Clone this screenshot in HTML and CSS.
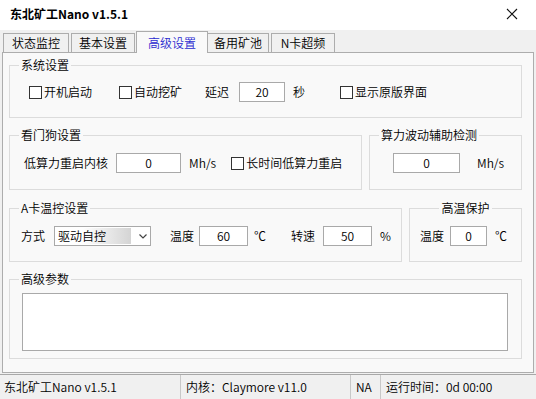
FILE: index.html
```html
<!DOCTYPE html>
<html lang="zh-CN">
<head>
<meta charset="utf-8">
<title>东北矿工Nano v1.5.1</title>
<link rel="stylesheet" href="styles.css">
</head>
<body>
<div class="window">
  <div class="titlebar">
    <div class="title">东北矿工Nano v1.5.1</div>
    <svg class="close" width="12" height="12" viewBox="0 0 12 12"><path d="M1 1L11 11M11 1L1 11" stroke="#111" stroke-width="1.1" fill="none"/></svg>
  </div>
  <div class="tabs">
    <div class="tab t1">状态监控</div>
    <div class="tab t2">基本设置</div>
    <div class="tab t3 active">高级设置</div>
    <div class="tab t4">备用矿池</div>
    <div class="tab t5">N卡超频</div>
  </div>
  <div class="panel">
    <fieldset class="grp g-sys">
      <legend>系统设置</legend>
      <div class="row">
        <span class="cb s1"></span><span class="lbl">开机启动</span>
        <span class="cb s2"></span><span class="lbl">自动挖矿</span>
        <span class="lbl s3">延迟</span>
        <span class="inp w-delay s4">20</span>
        <span class="lbl s5">秒</span>
        <span class="cb s6"></span><span class="lbl">显示原版界面</span>
      </div>
    </fieldset>
    <div class="pair">
      <fieldset class="grp g-dog">
        <legend>看门狗设置</legend>
        <div class="row">
          <span class="lbl d1">低算力重启内核</span>
          <span class="inp w-hash d2">0</span>
          <span class="lbl d3">Mh/s</span>
          <span class="cb d4"></span><span class="lbl">长时间低算力重启</span>
        </div>
      </fieldset>
      <fieldset class="grp g-wave">
        <legend>算力波动辅助检测</legend>
        <div class="row">
          <span class="inp w-wave v1">0</span>
          <span class="lbl v2">Mh/s</span>
        </div>
      </fieldset>
    </div>
    <div class="pair">
      <fieldset class="grp g-temp">
        <legend>A卡温控设置</legend>
        <div class="row">
          <span class="lbl a1">方式</span>
          <span class="select a2"><span class="sel-text">驱动自控</span><svg class="chev" width="8" height="5" viewBox="0 0 8 5"><path d="M0.5 0.5L4 4L7.5 0.5" stroke="#444" stroke-width="1.2" fill="none"/></svg></span>
          <span class="lbl a3">温度</span>
          <span class="inp w-t a4">60</span>
          <span class="lbl a5">℃</span>
          <span class="lbl a6">转速</span>
          <span class="inp w-t a7">50</span>
          <span class="lbl a8">%</span>
        </div>
      </fieldset>
      <fieldset class="grp g-hot">
        <legend class="center">高温保护</legend>
        <div class="row">
          <span class="lbl h1">温度</span>
          <span class="inp w-hot h2">0</span>
          <span class="lbl h3">℃</span>
        </div>
      </fieldset>
    </div>
    <fieldset class="grp g-adv">
      <legend>高级参数</legend>
      <div class="textarea"></div>
    </fieldset>
  </div>
  <div class="status">
    <div class="seg seg1">东北矿工Nano v1.5.1</div>
    <div class="seg seg2">内核：Claymore v11.0</div>
    <div class="seg seg3">NA</div>
    <div class="seg seg4">运行时间：0d 00:00</div>
  </div>
</div>
</body>
</html>
```

FILE: styles.css
```css
* { box-sizing: border-box; }
html, body { margin: 0; padding: 0; }
body {
  width: 536px;
  height: 399px;
  overflow: hidden;
  background: #f0f0f0;
  font-family: "Noto Sans CJK SC", "Noto Sans", sans-serif;
  font-size: 12px;
  font-weight: 350;
  line-height: 16px;
  color: #000;
}
.window { width: 536px; height: 399px; display: flex; flex-direction: column; }

.titlebar {
  height: 30px;
  background: #fff;
  display: flex;
  align-items: center;
  justify-content: space-between;
  padding: 0 18px 2px 10px;
}
.title { font-weight: bold; font-size: 12px; }
.close { display: block; }

.tabs {
  height: 22px;
  display: flex;
  align-items: flex-end;
  padding-left: 3px;
}
.tab {
  height: 19px;
  border: 1px solid #acacac;
  border-bottom: none;
  background: #f0f0f0;
  text-align: center;
  line-height: 18px;
  margin-right: 2px;
}
.t1 { width: 66px; }
.t2 { width: 64px; margin-right: 0; }
.t3 { width: 72px; }
.t4 { width: 62px; margin-left: -1px; }
.t5 { width: 64px; }
.tab.active {
  height: 22px;
  background: #f9f9f9;
  color: #2a2ad0;
  line-height: 22px;
  margin-bottom: -1px;
  position: relative;
  z-index: 1;
  margin-left: 1px;
  margin-right: 0;
}

.panel {
  margin: 0 2px;
  height: 321px;
  border: 1px solid #adadad;
  background: #f9f9f9;
  padding: 4px 11px 0 6px;
  display: flex;
  flex-direction: column;
}

.grp {
  margin: 0;
  border: 1px solid #dcdcdc;
  padding: 0;
  min-width: 0;
}
.grp legend {
  padding: 0 2px;
  margin-left: 9px;
  line-height: 16px;
  font-size: 12px;
}
.grp legend.center { margin-left: auto; margin-right: auto; }

.row { display: flex; align-items: center; height: 20px; }
.lbl { white-space: nowrap; }
.cb {
  width: 13px; height: 13px;
  border: 1px solid #333;
  background: #fff;
  margin-right: 2px;
  flex: none;
}
.inp {
  height: 20px;
  border: 1px solid #a9a9a9;
  background: #fff;
  text-align: center;
  line-height: 18px;
  flex: none;
}

/* system group */
.g-sys { height: 61px; padding-top: 9px; }
.s1 { margin-left: 19px; }
.s2 { margin-left: 27px; }
.s3 { margin-left: 23px; }
.s4 { margin-left: 10px; }
.w-delay { width: 46px; }
.s5 { margin-left: 8px; }
.s6 { margin-left: 35px; }

.pair { display: flex; gap: 7px; }

/* watchdog */
.g-dog { width: 353px; height: 63px; padding-top: 10px; margin-top: 9px; }
.g-wave { width: 153px; height: 63px; padding-top: 10px; margin-top: 9px; }
.d1 { margin-left: 14px; }
.d2 { margin-left: 8px; }
.w-hash { width: 65px; }
.d3 { margin-left: 8px; }
.d4 { margin-left: 15px; }
.v1 { margin-left: 23px; }
.w-wave { width: 67px; }
.v2 { margin-left: 17px; }

/* temp */
.g-temp { width: 393px; height: 62px; padding-top: 10px; margin-top: 10px; }
.g-hot { width: 113px; height: 62px; padding-top: 10px; margin-top: 10px; }
.a1 { margin-left: 11px; }
.a2 { margin-left: 9px; }
.select {
  width: 97px; height: 20px;
  border: 1px solid #a9a9a9;
  background: #fff;
  display: flex;
  align-items: center;
  padding-left: 2px;
  flex: none;
}
.sel-text {
  width: 74px; height: 16px;
  line-height: 16px;
  padding-left: 1px;
  background: linear-gradient(to right, #ffffff 35%, #d4d4d4 100%);
}
.chev { margin-left: 8px; display: block; }
.a3 { margin-left: 19px; }
.a4 { margin-left: 5px; }
.w-t { width: 49px; }
.a5 { margin-left: 6px; }
.a6 { margin-left: 25px; }
.a7 { margin-left: 8px; }
.a8 { margin-left: 8px; }
.h1 { margin-left: 10px; }
.h2 { margin-left: 6px; }
.w-hot { width: 37px; }
.h3 { margin-left: 8px; }

/* advanced */
.g-adv { height: 88px; padding-top: 6px; margin-top: 9px; }
.textarea {
  margin-left: 12px;
  width: 486px;
  height: 58px;
  border: 1px solid #a9a9a9;
  background: #fff;
}

/* status bar */
.status {
  margin-top: 1px;
  height: 25px;
  border-top: 1px solid #a8a8a8;
  display: flex;
  align-items: stretch;
}
.seg { line-height: 23px; white-space: nowrap; }
.seg1 { width: 181px; padding-left: 4px; border-right: 1px solid #c8c8c8; }
.seg2 { width: 170px; padding-left: 5px; border-right: 1px solid #c8c8c8; }
.seg3 { width: 30px; padding-left: 5px; border-right: 1px solid #c8c8c8; }
.seg4 { padding-left: 5px; }
```
